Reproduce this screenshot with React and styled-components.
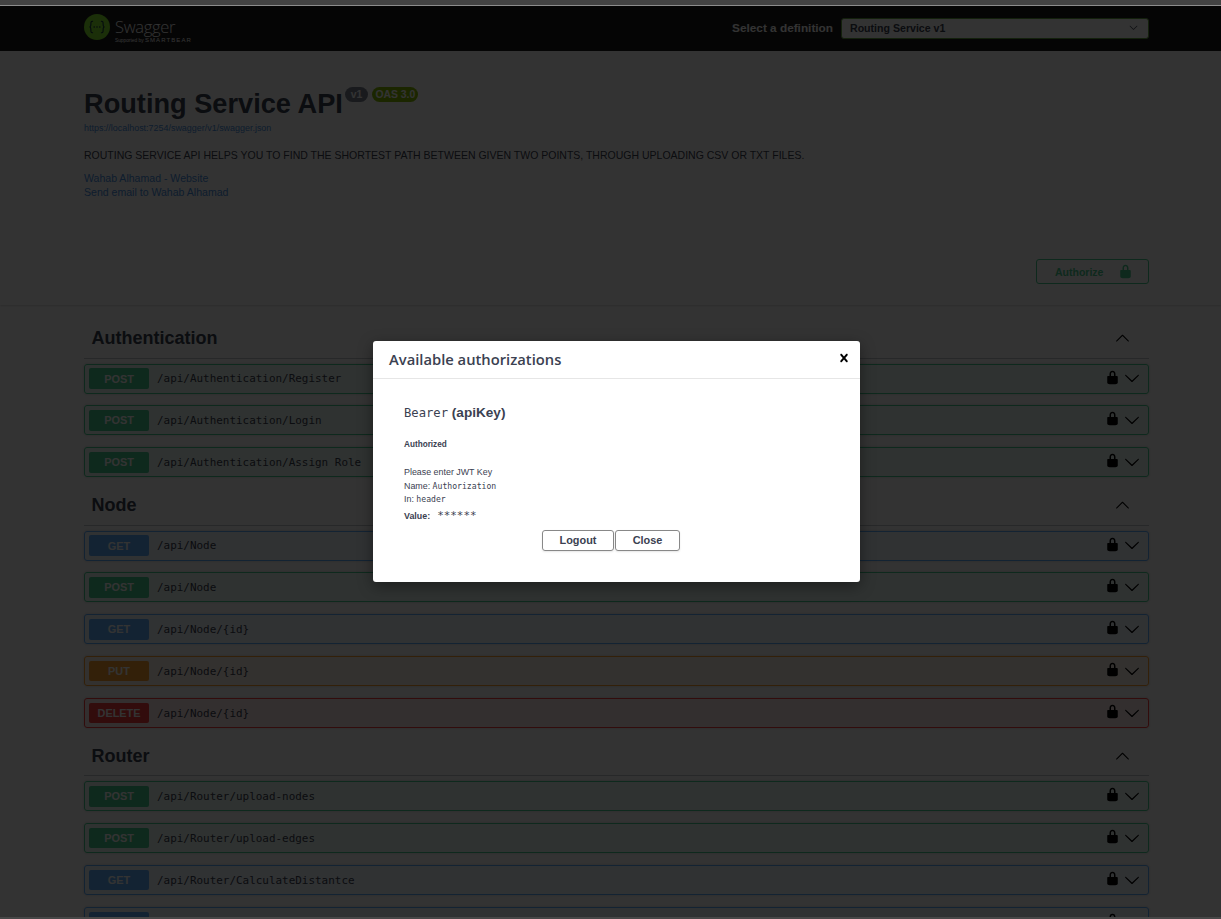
import React from "react";
import styled, { createGlobalStyle } from "styled-components";

const Global = createGlobalStyle`
  html, body { margin: 0; padding: 0; height: 100%; overflow: hidden; background: #fff; }
  body { font-family: "Liberation Sans", Arial, sans-serif; color: #3b4151; }
  #root { height: 100%; }
`;

const Shell = styled.div`
  height: 919px;
  display: flex;
  flex-direction: column;
  overflow: hidden;
`;
const TopEdge = styled.div`
  height: 5px;
  background: #434343;
  border-bottom: 1px solid #8d8d8d;
  flex: none;
`;
const BottomEdge = styled.div`
  height: 2px;
  background: #484848;
  flex: none;
`;
const Viewport = styled.div`
  position: relative;
  flex: 1;
  min-height: 0;
  overflow: hidden;
  background: #fff;
`;
const TopBar = styled.header`
  height: 45px;
  background: #1b1b1b;
  padding: 0 72px 0 84px;
  display: flex;
  align-items: center;
  justify-content: space-between;
`;
const Logo = styled.div`
  display: flex;
  align-items: center;
  gap: 5px;
`;
const LogoWords = styled.div`
  display: flex;
  flex-direction: column;
  color: #fff;
  margin-top: 4px;
`;
const LogoName = styled.span`
  font: 300 16.5px/20px "Open Sans", sans-serif;
  letter-spacing: -0.3px;
`;
const LogoSub = styled.span`
  font: 400 4.8px/7px "Liberation Sans", sans-serif;
  white-space: nowrap;
  & b {
    font-weight: 400;
    font-size: 6px;
    letter-spacing: 1.1px;
  }
`;
const DefinitionPicker = styled.div`
  display: flex;
  align-items: center;
  gap: 8px;
  padding-bottom: 1px;
`;
const DefinitionLabel = styled.span`
  color: #fff;
  font-size: 11.8px;
  font-weight: 700;
`;
const DefinitionSelect = styled.div`
  box-sizing: border-box;
  width: 308px;
  height: 21px;
  border: 1px solid #62a03f;
  border-radius: 3px;
  background: #fff;
  color: #3b4151;
  padding: 0 10px 1px 8px;
  display: flex;
  align-items: center;
  justify-content: space-between;
  font-size: 10.6px;
  font-weight: 700;
`;
const Container = styled.div`
  margin: 0 72px 0 84px;
`;
const InfoSection = styled.section`
  height: 254px;
  background: #fff;
  box-shadow: 0 1px 2px rgba(0, 0, 0, 0.15);
  display: flex;
  flex-direction: column;
`;
const TitleRow = styled.div`
  display: flex;
  align-items: flex-start;
  margin-top: 37px;
`;
const Title = styled.h1`
  margin: 0;
  font-size: 27.2px;
  line-height: 32px;
  font-weight: 700;
`;
const Badge = styled.span`
  margin: -1px 0 0 ${(p) => p.$gap}px;
  height: 15px;
  padding: 0 ${(p) => p.$pad}px;
  border-radius: 8px;
  background: ${(p) => p.$bg};
  color: #fff;
  font-size: 10.4px;
  line-height: 15px;
  font-weight: 700;
`;
const SpecLink = styled.a`
  display: block;
  color: #4990e2;
  font-size: 8.95px;
  line-height: 10px;
  margin-top: 3px;
`;
const Description = styled.p`
  margin: 15px 0 0;
  font-size: 10.5px;
  line-height: 14px;
`;
const Contacts = styled.div`
  margin-top: 9px;
`;
const ContactLink = styled.a`
  display: block;
  color: #4990e2;
  font-size: 10.55px;
  line-height: 14px;
`;
const AuthorizeRow = styled.div`
  display: flex;
  justify-content: flex-end;
  margin-top: 60px;
`;
const AuthorizeButton = styled.div`
  box-sizing: border-box;
  width: 113px;
  height: 25px;
  border: 1px solid #49cc90;
  border-radius: 3px;
  color: #49cc90;
  font-size: 10.5px;
  font-weight: 700;
  display: flex;
  align-items: center;
  padding-left: 18px;
  gap: 15px;
`;
const GroupList = styled(Container)`
  padding-top: 17.1px;
`;
const GroupHeader = styled.div`
  height: 36.5px;
  box-sizing: border-box;
  border-bottom: 1px solid rgba(59, 65, 81, 0.3);
  display: flex;
  align-items: center;
  justify-content: space-between;
  padding: 0 19px 3px 7.5px;
  margin-bottom: 5px;
`;
const GroupName = styled.h3`
  margin: 0;
  font-size: 18px;
  line-height: 24px;
  font-weight: 700;
`;
const OpRow = styled.div`
  box-sizing: border-box;
  height: 30px;
  margin-bottom: 11.85px;
  border: 1px solid ${(p) => p.$color};
  border-radius: 3px;
  background: ${(p) => p.$color}1a;
  box-shadow: 0 0 3px rgba(0, 0, 0, 0.19);
  padding: 0 8px 0 4px;
  display: flex;
  align-items: center;
`;
const Method = styled.span`
  width: 60px;
  height: 20.5px;
  border-radius: 2px;
  background: ${(p) => p.$color};
  color: #fff;
  font-size: 10.9px;
  font-weight: 700;
  display: flex;
  align-items: center;
  justify-content: center;
  flex: none;
`;
const OpPath = styled.span`
  margin-left: 8px;
  flex: 1;
  font-family: "DejaVu Sans Mono", monospace;
  font-size: 10.95px;
  color: #3b4151;
`;
const OpIcons = styled.div`
  display: flex;
  align-items: center;
  gap: 4px;
`;
const Backdrop = styled.div`
  position: absolute;
  inset: 0;
  background: rgba(0, 0, 0, 0.8);
  display: flex;
  align-items: center;
  justify-content: center;
  padding-left: 12px;
`;
const Modal = styled.div`
  width: 487px;
  height: 241px;
  background: #fff;
  border-radius: 3px;
  box-shadow: 0 4px 15px rgba(0, 0, 0, 0.4);
  display: flex;
  flex-direction: column;
`;
const ModalHead = styled.div`
  height: 37px;
  flex: none;
  border-bottom: 1px solid #e6e6e6;
  display: flex;
  align-items: center;
  justify-content: space-between;
  padding: 0 8px 0 16px;
`;
const ModalTitle = styled.h3`
  margin: 0 0 2px;
  font: 600 14.75px/20px "Open Sans", sans-serif;
  color: #3b4151;
`;
const ModalBody = styled.div`
  padding: 25px 31px 0;
  display: flex;
  flex-direction: column;
`;
const SchemeName = styled.h4`
  margin: 0;
  font-size: 13.6px;
  line-height: 18px;
  font-weight: 700;
  & code {
    font-family: "DejaVu Sans Mono", monospace;
    font-weight: 400;
    font-size: 12.2px;
  }
`;
const AuthState = styled.h6`
  margin: 17px 0 0;
  font-size: 8.2px;
  line-height: 12px;
  font-weight: 700;
`;
const DetailLine = styled.div`
  font-size: 8.9px;
  line-height: ${(p) => p.$line || 13}px;
  margin-top: ${(p) => p.$top || 0}px;
  & code {
    font-family: "DejaVu Sans Mono", monospace;
    font-size: 8.15px;
  }
`;
const ValueLine = styled.div`
  display: flex;
  align-items: baseline;
  gap: 7px;
  font-size: 8.9px;
  font-weight: 700;
  line-height: 15px;
  margin-top: 2px;
  & code {
    font-family: "DejaVu Sans Mono", monospace;
    font-weight: 400;
    font-size: 10.9px;
  }
`;
const Buttons = styled.div`
  display: flex;
  justify-content: center;
  margin-top: 6px;
  padding-right: 11px;
`;
const ModalButton = styled.div`
  box-sizing: border-box;
  width: ${(p) => p.$w}px;
  height: 21px;
  border: 1.5px solid #888;
  border-radius: 3px;
  box-shadow: 0 1px 2px rgba(0, 0, 0, 0.1);
  color: #3b4151;
  font-size: 10.9px;
  font-weight: 700;
  padding-bottom: 2px;
  display: flex;
  align-items: center;
  justify-content: center;
  margin-left: ${(p) => p.$left || 0}px;
`;
const Glyph = styled.svg`
  flex: none;
  fill: ${(p) => p.$color};
  transform: ${(p) => (p.$flip ? "rotate(180deg)" : "none")};
  margin-bottom: ${(p) => p.$lift || 0}px;
`;
const MarkSvg = styled.svg`
  flex: none;
  margin-bottom: 3px;
`;

const ARROW = "M17.418 6.109c.272-.268.709-.268.979 0s.271.701 0 .969l-7.908 7.83c-.27.268-.707.268-.979 0l-7.908-7.83c-.27-.268-.27-.701 0-.969.271-.268.709-.268.979 0L10 13.25l7.418-7.141z";
const LOCK = "M15.8 8H14V5.6C14 2.703 12.665 1 10 1 7.334 1 6 2.703 6 5.6V8H4c-.553 0-1 .646-1 1.199V17c0 .549.428 1.139.951 1.307l1.197.387C5.672 18.861 6.55 19 7.1 19h5.8c.549 0 1.428-.139 1.951-.307l1.196-.387c.524-.167.953-.757.953-1.306V9.199C17 8.646 16.352 8 15.8 8zM12 8H8V5.199C8 3.754 8.797 3 10 3c1.203 0 2 .754 2 2.199V8z";
const CLOSE = "M14.348 14.849c-.469.469-1.229.469-1.697 0L10 11.819l-2.651 3.029c-.469.469-1.229.469-1.697 0-.469-.469-.469-1.229 0-1.697l2.758-3.15-2.759-3.152c-.469-.469-.469-1.228 0-1.697s1.228-.469 1.697 0L10 8.183l2.651-3.031c.469-.469 1.228-.469 1.697 0s.469 1.229 0 1.697l-2.758 3.152 2.758 3.15c.469.469.469 1.229 0 1.698z";

const Icon = ({ d, size, color = "#000", flip, lift }) => (
  <Glyph width={size} height={size} viewBox="0 0 20 20" $color={color} $flip={flip} $lift={lift}>
    <path d={d} />
  </Glyph>
);

const SwaggerMark = () => (
  <MarkSvg width="26" height="26" viewBox="0 0 26 26">
    <circle cx="13" cy="13" r="13" fill="#85ea2d" />
    <g fill="none" stroke="#173646" strokeWidth="1.1" strokeLinecap="round">
      <path d="M8.6 7.2c-1.9 0-1.7 1.4-1.7 2.9 0 1.6-.7 2.9-1.4 2.9.7 0 1.4 1.3 1.4 2.9 0 1.5-.2 2.9 1.7 2.9" />
      <path d="M17.4 7.2c1.9 0 1.7 1.4 1.7 2.9 0 1.6.7 2.9 1.4 2.9-.7 0-1.4 1.3-1.4 2.9 0 1.5.2 2.9-1.7 2.9" />
    </g>
    <g fill="#173646">
      <circle cx="10.2" cy="13" r=".8" />
      <circle cx="13" cy="13" r=".8" />
      <circle cx="15.8" cy="13" r=".8" />
    </g>
  </MarkSvg>
);

const COLORS = { POST: "#49cc90", GET: "#61affe", PUT: "#fca130", DELETE: "#f93e3e" };

const GROUPS = [
  {
    name: "Authentication",
    ops: [
      ["POST", "/api/Authentication/Register"],
      ["POST", "/api/Authentication/Login"],
      ["POST", "/api/Authentication/Assign Role"],
    ],
  },
  {
    name: "Node",
    ops: [
      ["GET", "/api/Node"],
      ["POST", "/api/Node"],
      ["GET", "/api/Node/{id}"],
      ["PUT", "/api/Node/{id}"],
      ["DELETE", "/api/Node/{id}"],
    ],
  },
  {
    name: "Router",
    ops: [
      ["POST", "/api/Router/upload-nodes"],
      ["POST", "/api/Router/upload-edges"],
      ["GET", "/api/Router/CalculateDistantce"],
      ["GET", "/api/Router/ShortestPath/{source}/{target}"],
    ],
  },
];

export default function App() {
  return (
    <Shell>
      <Global />
      <TopEdge />
      <Viewport>
        <TopBar>
          <Logo>
            <SwaggerMark />
            <LogoWords>
              <LogoName>Swagger</LogoName>
              <LogoSub>
                Supported by <b>SMARTBEAR</b>
              </LogoSub>
            </LogoWords>
          </Logo>
          <DefinitionPicker>
            <DefinitionLabel>Select a definition</DefinitionLabel>
            <DefinitionSelect>
              Routing Service v1
              <Icon d={ARROW} size={9} color="#3b4151" />
            </DefinitionSelect>
          </DefinitionPicker>
        </TopBar>
        <InfoSection>
          <Container>
            <TitleRow>
              <Title>Routing Service API</Title>
              <Badge $bg="#7d8492" $gap={2} $pad={6}>v1</Badge>
              <Badge $bg="#89bf04" $gap={4} $pad={3}>OAS 3.0</Badge>
            </TitleRow>
            <SpecLink>https://localhost:7254/swagger/v1/swagger.json</SpecLink>
            <Description>
              ROUTING SERVICE API HELPS YOU TO FIND THE SHORTEST PATH BETWEEN GIVEN TWO POINTS, THROUGH UPLOADING CSV OR TXT FILES.
            </Description>
            <Contacts>
              <ContactLink>Wahab Alhamad - Website</ContactLink>
              <ContactLink>Send email to Wahab Alhamad</ContactLink>
            </Contacts>
            <AuthorizeRow>
              <AuthorizeButton>
                Authorize
                <Icon d={LOCK} size={15} color="#49cc90" />
              </AuthorizeButton>
            </AuthorizeRow>
          </Container>
        </InfoSection>
        <GroupList>
          {GROUPS.map((g) => (
            <section key={g.name}>
              <GroupHeader>
                <GroupName>{g.name}</GroupName>
                <Icon d={ARROW} size={15} flip />
              </GroupHeader>
              {g.ops.map(([m, p], i) => (
                <OpRow key={i} $color={COLORS[m]}>
                  <Method $color={COLORS[m]}>{m}</Method>
                  <OpPath>{p}</OpPath>
                  <OpIcons>
                    <Icon d={LOCK} size={15} lift={3} />
                    <Icon d={ARROW} size={16} lift={1} />
                  </OpIcons>
                </OpRow>
              ))}
            </section>
          ))}
        </GroupList>
        <Backdrop>
          <Modal>
            <ModalHead>
              <ModalTitle>Available authorizations</ModalTitle>
              <Icon d={CLOSE} size={16} lift={3} />
            </ModalHead>
            <ModalBody>
              <SchemeName>
                <code>Bearer</code> (apiKey)
              </SchemeName>
              <AuthState>Authorized</AuthState>
              <DetailLine $top={14} $line={15}>Please enter JWT Key</DetailLine>
              <DetailLine>Name: <code>Authorization</code></DetailLine>
              <DetailLine>In: <code>header</code></DetailLine>
              <ValueLine>Value: <code>******</code></ValueLine>
              <Buttons>
                <ModalButton $w={72}>Logout</ModalButton>
                <ModalButton $w={65} $left={1}>Close</ModalButton>
              </Buttons>
            </ModalBody>
          </Modal>
        </Backdrop>
      </Viewport>
      <BottomEdge />
    </Shell>
  );
}
